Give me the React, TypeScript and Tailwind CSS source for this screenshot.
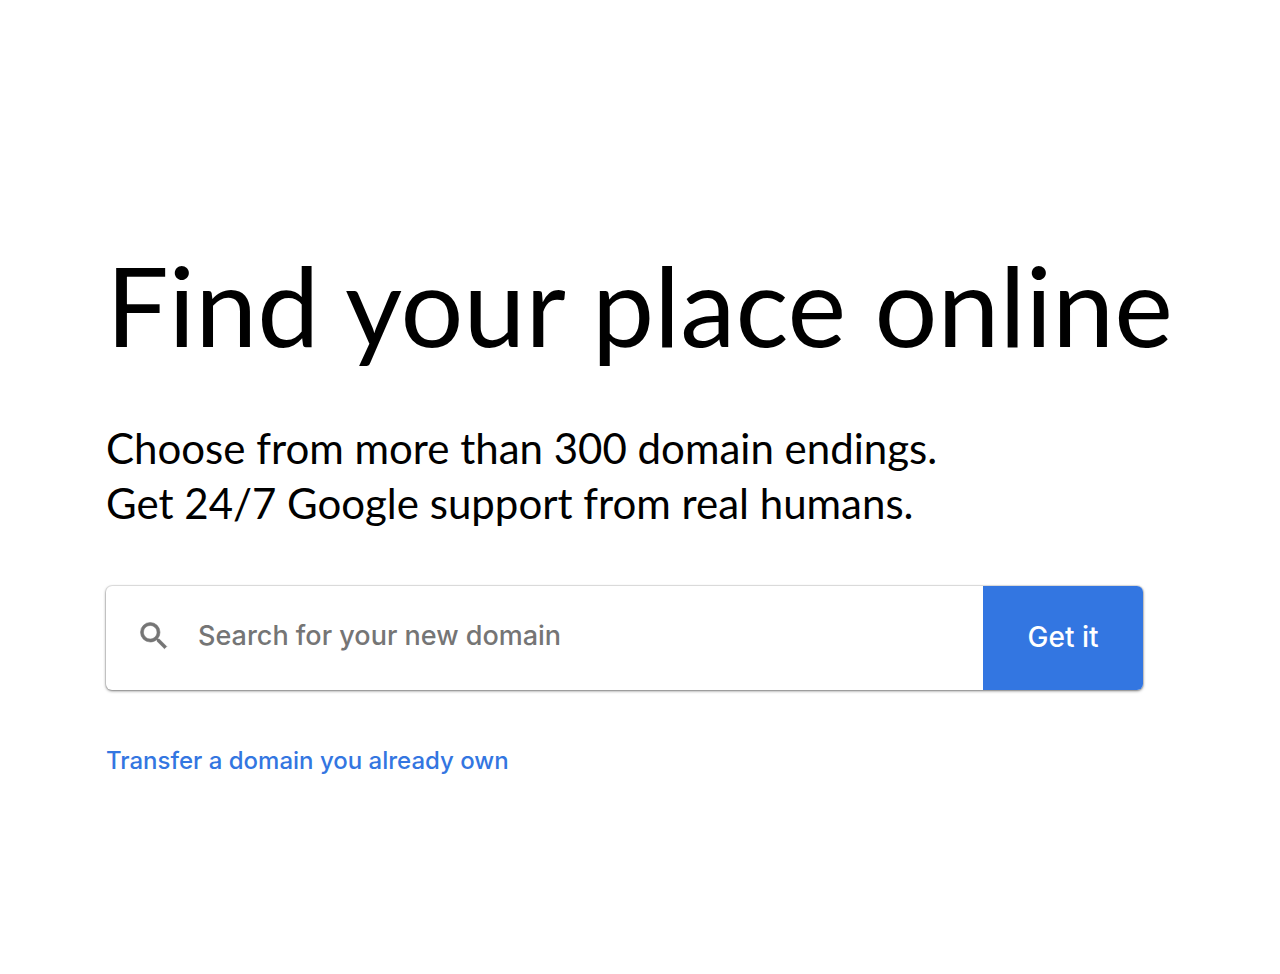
import { useState } from "react";

export default function App() {
  const [domain, setDomain] = useState("");
  return (
    <main className="min-h-screen bg-white pt-[236px] pl-[106px] pr-8 pb-12 font-['Lato',sans-serif] text-black">
      <h1 className="whitespace-nowrap text-[111px] leading-[136px]">Find your place online</h1>
      <p className="mt-[49px] text-[42px] leading-[55px]">
        Choose from more than 300 domain endings.
        <br />
        Get 24/7 Google support from real humans.
      </p>
      <form
        className="mt-[55px] mr-[105px] flex h-[104px] overflow-hidden rounded-md bg-white font-['Inter',sans-serif] font-medium shadow-[0_0_0_1px_rgba(0,0,0,0.08),0_1px_3px_rgba(0,0,0,0.5)]"
        onSubmit={(e) => e.preventDefault()}
      >
        <label htmlFor="domain" className="flex items-center pb-1 pl-[30px] pr-[26px]" aria-label="Search for your new domain">
          <svg viewBox="0 0 24 24" className="size-9 fill-[#757575] stroke-[#757575] stroke-[0.4]" aria-hidden="true">
            <path d="M15.5 14h-.79l-.28-.27A6.47 6.47 0 0 0 16 9.5 6.5 6.5 0 1 0 9.5 16c1.61 0 3.09-.59 4.23-1.57l.27.28v.79l5 4.99L20.49 19l-4.99-5zm-6 0C7.01 14 5 11.99 5 9.5S7.01 5 9.5 5 14 7.01 14 9.5 11.99 14 9.5 14z" />
          </svg>
        </label>
        <input
          id="domain"
          type="text"
          value={domain}
          onChange={(e) => setDomain(e.target.value)}
          placeholder="Search for your new domain"
          className="min-w-0 flex-1 bg-transparent pb-1 text-[27px] outline-none placeholder:text-[#757575]"
        />
        <button type="submit" className="w-40 bg-[#3376e1] pb-0.5 text-[28px] text-white">Get it</button>
      </form>
      <a href="#transfer" className="mt-[53px] inline-block font-['Inter',sans-serif] text-[24px] leading-9 font-medium text-[#3376e1]">
        Transfer a domain you already own
      </a>
    </main>
  );
}
